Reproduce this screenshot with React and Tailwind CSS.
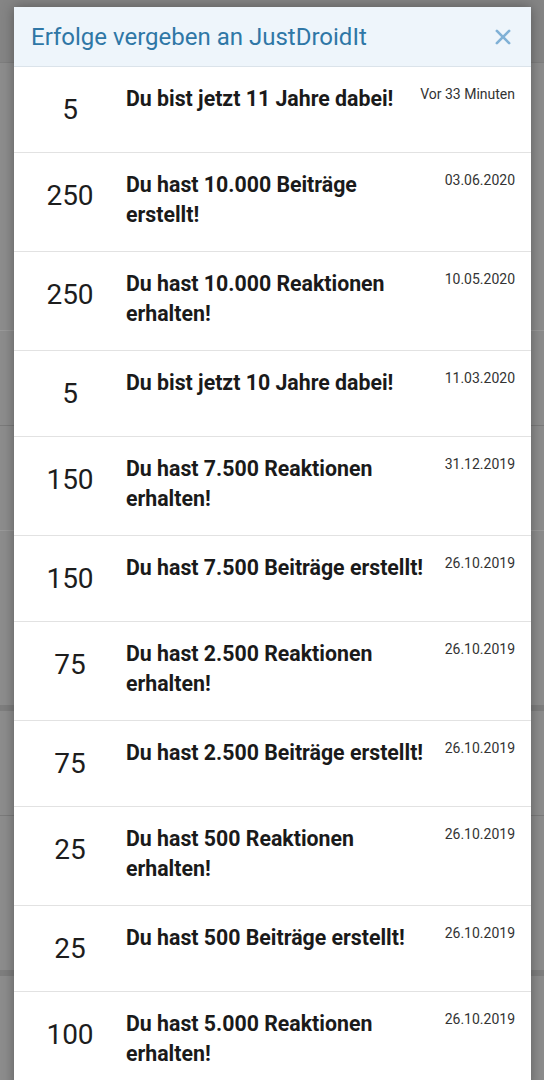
import { IoClose } from "react-icons/io5";

const items = [
    { points: 5, title: "Du bist jetzt 11 Jahre dabei!", date: "Vor 33 Minuten" },
    { points: 250, title: "Du hast 10.000 Beiträge erstellt!", date: "03.06.2020" },
    { points: 250, title: "Du hast 10.000 Reaktionen erhalten!", date: "10.05.2020" },
    { points: 5, title: "Du bist jetzt 10 Jahre dabei!", date: "11.03.2020" },
    { points: 150, title: "Du hast 7.500 Reaktionen erhalten!", date: "31.12.2019" },
    { points: 150, title: "Du hast 7.500 Beiträge erstellt!", date: "26.10.2019" },
    { points: 75, title: "Du hast 2.500 Reaktionen erhalten!", date: "26.10.2019" },
    { points: 75, title: "Du hast 2.500 Beiträge erstellt!", date: "26.10.2019" },
    { points: 25, title: "Du hast 500 Reaktionen erhalten!", date: "26.10.2019" },
    { points: 25, title: "Du hast 500 Beiträge erstellt!", date: "26.10.2019" },
    { points: 100, title: "Du hast 5.000 Reaktionen erhalten!", date: "26.10.2019" },
];

const TrophyRow = ({ points, title, date }) => {
    return (
        <li className="flex items-start border-b border-[#e2e2e2] pt-[17px] pb-[16px] pr-[16px]">
            <div className="w-[112px] shrink-0 text-center text-[28px] leading-[52px] text-[#1d1d1d]">{points}</div>
            <p className="flex-1 mb-[5px] text-[21.3px] leading-[30px] font-bold text-[#1a1a1a]">{title}</p>
            <span className="shrink-0 ml-[16px] text-[14px] leading-[20px] text-[#333]">{date}</span>
        </li>
    );
};

const App = () => {
    return (
        <div className="relative h-[1080px] w-[544px] overflow-hidden bg-[#8d8d8d] font-['Roboto',sans-serif]">
            {/* page behind the overlay */}
            <div className="absolute inset-0 flex flex-col">
                <div className="h-[62px] bg-[#858585]" />
                <div className="h-[268px] border-t border-[#7e7e7e]" />
                <div className="h-[95px] border-t border-[#9a9a9a]" />
                <div className="h-[105px] border-t border-[#7b7b7b]" />
                <div className="h-[175px] border-t border-[#9a9a9a]" />
                <div className="h-[110px] border-t-[6px] border-[#7e7e7e]" />
                <div className="h-[155px] border-t border-[#7b7b7b]" />
                <div className="flex-1 border-t-[6px] border-[#7e7e7e]" />
            </div>

            <div className="relative ml-[14px] mr-[13px] mt-[7px] bg-white shadow-[0_0_12px_rgba(0,0,0,0.35)]">
                <div className="flex items-center justify-between h-[60px] pl-[17px] pr-[14px] bg-[#eef5fb] border-b border-[#dbe3ea]">
                    <h2 className="text-[24px] leading-[30px] text-[#2f77a6]">Erfolge vergeben an JustDroidIt</h2>
                    <IoClose size={28} className="text-[#80b1d6]" />
                </div>
                <ul>
                    {items.map((item, i) => (
                        <TrophyRow key={i} {...item} />
                    ))}
                </ul>
            </div>
        </div>
    );
};

export default App;
